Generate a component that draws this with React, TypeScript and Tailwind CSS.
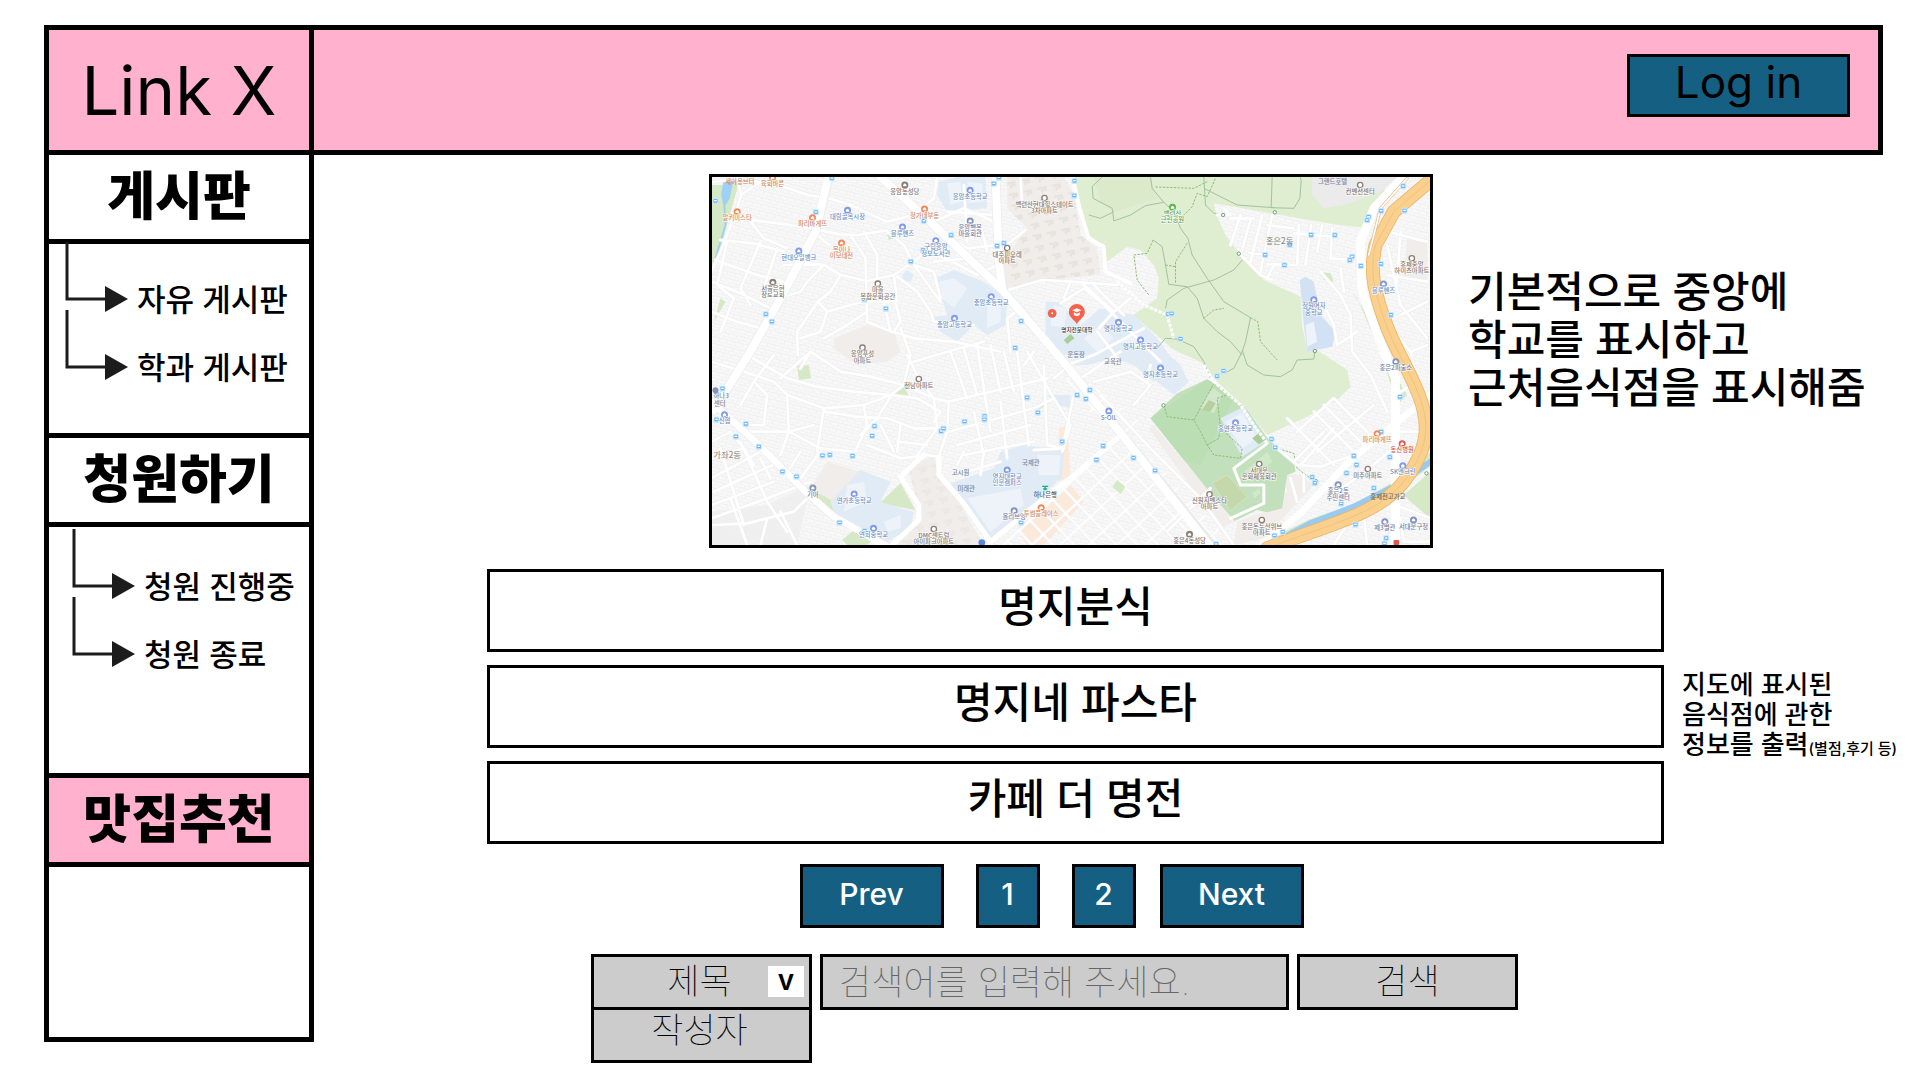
import React from "react";

const KR = "font-['Inter','Noto_Sans_CJK_KR',sans-serif]";

/* ---------- Map drawing ---------- */

type Place = { x: number; y: number; c: string; t: string[]; shape?: "ring" };

const BLUE = "#7f9be8";
const ORANGE = "#f08a5d";
const BROWN = "#8b7d75";
const SLATE = "#8593bb";
const GREEN = "#5fb648";
const RED = "#e2584f";

const textColors: Record<string, string> = {
  [BLUE]: "#7090bd",
  [ORANGE]: "#cf8763",
  [BROWN]: "#81746d",
  [SLATE]: "#7480a3",
  [GREEN]: "#5f9f4c",
  [RED]: "#cf5550",
};

const places: Place[] = [
  { x: 110, y: 140, c: ORANGE, t: ["알키미스타"] },
  { x: 216, y: 38, c: ORANGE, t: ["육회바른"] },
  { x: 336, y: 158, c: ORANGE, t: ["파리바게뜨"] },
  { x: 441, y: 136, c: BLUE, t: ["대림골목시장"] },
  { x: 423, y: 234, c: ORANGE, t: ["봄이나", "이모네전"] },
  { x: 295, y: 258, c: BLUE, t: ["현대오일뱅크"] },
  { x: 613, y: 60, c: BROWN, t: ["응암동성당"] },
  { x: 672, y: 132, c: ORANGE, t: ["정가네부동"] },
  { x: 606, y: 186, c: BLUE, t: ["블루핸즈"] },
  { x: 706, y: 227, c: BLUE, t: ["구립응암", "정보도서관"] },
  { x: 809, y: 76, c: BLUE, t: ["응암초등학교"] },
  { x: 809, y: 168, c: SLATE, t: ["응암행복", "마을회관"] },
  { x: 1032, y: 99, c: BROWN, t: ["백련산현대힐스테이트", "3차아파트"], shape: "ring" },
  { x: 920, y: 249, c: BROWN, t: ["대주피오레", "아파트"], shape: "ring" },
  { x: 217, y: 352, c: BROWN, t: ["서울은현", "장로교회"] },
  { x: 532, y: 356, c: BROWN, t: ["마을", "복합문화공간"], shape: "ring" },
  { x: 872, y: 395, c: BLUE, t: ["충암초등학교"] },
  { x: 762, y: 460, c: BLUE, t: ["충암고등학교"] },
  { x: 486, y: 548, c: BROWN, t: ["응암푸성", "아파트"], shape: "ring" },
  { x: 1254, y: 472, c: BLUE, t: ["명지중학교"] },
  { x: 1320, y: 525, c: BLUE, t: ["명지고등학교"] },
  { x: 1380, y: 609, c: BLUE, t: ["명지초등학교"] },
  { x: 1416, y: 127, c: GREEN, t: ["백련산", "근린공원"] },
  { x: 1979, y: 60, c: BROWN, t: ["컨벤션센터"], shape: "ring" },
  { x: 1840, y: 404, c: BLUE, t: ["정원여자", "중학교"] },
  { x: 2134, y: 280, c: BROWN, t: ["홍제중앙", "하이츠아파트"], shape: "ring" },
  { x: 2049, y: 357, c: BLUE, t: ["블루핸즈"] },
  { x: 2086, y: 590, c: SLATE, t: ["홍은2파출소"] },
  { x: 655, y: 642, c: BROWN, t: ["전남아파트"], shape: "ring" },
  { x: 72, y: 749, c: BLUE, t: ["신협"] },
  { x: 337, y: 969, c: SLATE, t: ["기아"] },
  { x: 461, y: 987, c: BLUE, t: ["연가초등학교"] },
  { x: 519, y: 1090, c: BLUE, t: ["연희중학교"] },
  { x: 700, y: 1092, c: BROWN, t: ["DMC센트럴", "아이파크아파트"], shape: "ring" },
  { x: 920, y: 915, c: BLUE, t: ["명지대학교", "인문캠퍼스"] },
  { x: 941, y: 1037, c: SLATE, t: ["올리브영"] },
  { x: 1022, y: 1028, c: ORANGE, t: ["투썸플레이스"] },
  { x: 1225, y: 738, c: BLUE, t: ["S-OIL"] },
  { x: 1605, y: 773, c: BLUE, t: ["홍연초등학교"] },
  { x: 1676, y: 897, c: BROWN, t: ["서대문", "문화체육회관"], shape: "ring" },
  { x: 1527, y: 988, c: BROWN, t: ["신원지벤스타", "아파트"], shape: "ring" },
  { x: 1684, y: 1065, c: BROWN, t: ["홍은동두산위브", "아파트"], shape: "ring" },
  { x: 1467, y: 1108, c: BROWN, t: ["홍은4동성당"] },
  { x: 2030, y: 806, c: ORANGE, t: ["파리바게뜨"] },
  { x: 2105, y: 836, c: RED, t: ["동신병원"] },
  { x: 2107, y: 902, c: BLUE, t: ["SK엔크린"] },
  { x: 2002, y: 912, c: BROWN, t: ["미주아파트"], shape: "ring" },
  { x: 1913, y: 959, c: SLATE, t: ["홍은2동", "주민센터"] },
  { x: 2053, y: 1070, c: SLATE, t: ["제3별관"] },
  { x: 2139, y: 1065, c: SLATE, t: ["서대문구청"] },
];

const stops: [number, number][] = [
  [394, 40], [346, 142], [45, 108], [196, 448], [214, 470], [492, 404], [556, 431], [631, 290], [670, 168], [752, 211],
  [668, 256], [890, 243], [910, 235], [880, 56], [895, 38], [962, 469], [944, 549], [1122, 48], [1121, 92], [1403, 448],
  [1413, 446], [1440, 522], [1694, 270], [1752, 301], [1768, 240], [1832, 210], [1903, 211], [2004, 156], [2000, 166], [2042, 138],
  [2108, 64], [2112, 137], [1955, 275], [1948, 286], [1981, 303], [2041, 297], [2071, 450], [66, 671], [48, 764], [106, 815],
  [136, 777], [175, 845], [246, 920], [288, 935], [366, 872], [388, 870], [456, 873], [522, 784], [515, 813], [620, 662],
  [722, 799], [729, 791], [792, 770], [852, 754], [852, 764], [980, 698], [1012, 743], [1085, 830], [417, 1073], [492, 1098],
  [962, 1073], [1130, 691], [1168, 676], [1156, 702], [1208, 843], [1188, 885], [1299, 879], [1364, 917], [1550, 634], [1569, 618],
  [1713, 823], [1724, 848], [1835, 937], [1843, 954], [1938, 925], [1968, 900], [1960, 873], [2042, 801], [2068, 877], [2099, 696],
  [2020, 970], [1922, 1016], [1965, 1079], [1722, 1112], [1747, 1101], [1547, 1138], [2057, 1120], [2052, 1136],
];

const minorRoads = [
  "M33 52 120 40 250 66 330 92 380 98 450 120 560 170 640 150 700 100 710 36",
  "M110 36 122 90 110 130 60 260 33 320",
  "M122 90 180 50 240 60M110 160 240 176 330 190 420 208 470 210 560 196M150 170 190 220 260 250",
  "M60 225 160 235 250 260M45 285 170 330 250 350M33 350 120 385 210 430M33 440 110 470 180 490M80 230 50 360 100 400 60 500M180 230 120 370 150 420M230 250 180 400",
  "M300 290 370 300 420 330 500 348 580 330 640 290 700 240 720 200M370 300 320 350 300 380 250 395M250 300 370 300M420 330 390 380 352 410 380 440 480 412 590 408 580 330",
  "M340 200 385 240M450 210 495 280 500 470M490 200 530 270 530 340M560 200 610 240 640 300 700 320 720 400M352 410 290 500 292 570M380 440 360 500 300 520M500 440 440 480 370 520",
  "M500 470 560 495 640 520 760 530 900 560M585 410 600 470 580 500M550 410 570 500M590 335 650 380 690 440 700 470 820 480M640 300 720 410",
  "M700 170 790 130 880 170M740 140 880 150M790 60 800 230M840 180 860 260M720 270 830 330 890 300M760 225 800 250 890 240M700 290 800 280",
  "M905 250 975 195M960 36 965 120M905 370 960 430 920 460 930 560M905 380 1025 345 1110 350 1250 360M1000 560 970 600",
  "M1080 415 1150 370 1200 410 1290 500 1380 590M1110 350 1090 400M1145 355 1240 440 1195 490M1180 360 1270 450M1240 440 1290 400M1190 500 1260 590",
  "M33 590 130 620 220 650 260 690 370 730 490 720 570 690 650 700 720 740M140 570 260 640 350 665 460 680 570 690 610 660",
  "M220 570 160 650 120 720M260 690 265 800 360 850 460 860M370 730 350 860M240 640 330 560 300 610M330 560 420 620 510 635 610 660 700 700 745 710",
  "M370 740 470 755 560 760 640 790 720 790M490 720 500 780 460 870M570 695 530 760 480 810M145 800 265 800 340 780M160 650 200 690 190 780 140 780",
  "M265 800 240 870M300 860 250 940M360 860 300 940M33 830 90 800 130 850 160 900M33 880 130 850M40 980 170 920 240 890M33 1060 200 1000 330 950M60 850 130 1080M120 830 200 1010 260 1100M33 940 180 860M210 940 180 880M33 1020 220 950",
  "M33 1080 140 1075 280 1040 330 990M90 1000 140 1140M200 1060 180 1140M240 1040 290 1140",
  "M500 840 600 880 680 870 715 875M540 780 580 860M600 780 590 860M590 830 680 840M700 700 710 790 650 870M745 710 740 800 715 875",
  "M620 570 655 640 700 700M640 590 740 560 850 530M600 490 630 570 610 660M720 740 700 770",
  "M745 800 1000 730 1060 700M745 710 1040 640M770 840 990 780M790 870 1000 830M800 920 900 890M840 930 850 860M790 860 770 900",
  "M750 560 800 700M790 550 830 690M830 540 870 800M870 540 900 680M910 560 940 680M950 560 985 840M820 740 850 870M900 710 920 880",
  "M980 560 1060 700 1110 780 1085 860M1030 600 1040 840 1090 850M1060 640 1110 600M1000 855 1090 850",
  "M1570 130 1590 150 1550 150M1590 160 1660 160M1590 240 1620 150M1620 270 1650 165M1650 290 1685 150M1680 320 1715 150M1700 180 1780 190M1645 264 1700 268M1700 298 1790 300 1795 180M1700 340 1720 300M1780 205 1900 215M1832 180 1815 300M1865 180 1850 260M1895 190 1890 280 1950 284",
  "M1615 264 1680 330 1715 345M1860 320 1920 390 1950 450 1955 560 2010 630 2060 740M1870 420 1900 480 1910 540 1970 500M1920 310 1930 380",
  "M1730 850 1790 900 1860 905 1960 870M1760 760 1840 840 1900 900M1780 890 1870 800M1800 900 1900 790M1840 740 1970 870M1870 720 1990 840M1900 700 2010 810M1790 800 1900 700M1850 860 2020 720M1770 940 1790 1010M1810 930 1810 980",
  "M1600 1140 1500 1000 1350 850 1200 690M2060 200 2180 230M2060 330 2180 350M2060 240 2100 420 2180 520M2100 450 2180 410M2100 200 2090 350M2080 500 2130 560 2180 540M2085 690 2150 650 2130 560M2085 800 2190 800",
  "M1880 1000 1980 930 2080 850M1800 1100 2080 1010M1900 1140 1950 1060M2000 1140 1990 1050M2085 1020 2190 1060M2100 1060 2110 1130 2190 1130M1400 1100 1480 1020 1530 970",
  "M1350 600 1340 650M1100 600 1180 570 1330 490M1140 640 1260 560M1180 650 1290 620 1350 660M1120 690 1090 830M1350 660 1300 720",
];

const trails = [
  "M1205 36 1175 65 1178 100 1235 130 1240 168 1290 150 1335 122 1390 112 1355 70 1350 36",
  "M1165 150 1200 160 1240 140M1390 112 1420 140 1440 190 1462 220 1475 270 1520 340 1570 410 1650 458 1635 530 1625 560 1600 610 1570 625",
  "M1510 36 1515 120 1540 145 1565 150M1510 70 1550 90 1610 120 1720 128M1715 36 1712 128 1780 130 1798 100 1802 50 1800 36",
  "M1625 285 1600 315 1540 345 1450 370 1400 405 1395 430M1358 225 1385 245 1395 300 1405 358 1460 365 1490 400 1510 460 1550 500 1590 530 1625 570",
  "M1625 555 1640 600 1690 630 1740 635 1775 615 1790 585 1840 582 1843 560M1365 555 1395 520 1430 522 1480 545 1510 590 1530 640",
];

const dashedTrails = [
  "M1365 66 1480 70 1520 50M1440 160 1475 125 1490 85 1520 95 1545 40M1358 225 1340 265 1300 270 1310 345 1345 390M1460 235 1425 290 1425 355M1395 300 1425 305M1510 460 1540 435 1570 430M1650 458 1672 470 1680 530 1730 585",
  "M1390 720 1400 755 1480 765 1500 800 1520 840 1540 870 1620 880 1625 850 1560 790 1550 700 1580 690M1480 765 1540 655M1520 840 1555 820 1560 780M1724 848 1780 865 1790 910 1830 940",
];

const highway = "M2215 25 2080 140 2025 240C2010 310 2015 360 2050 460S2120 600 2155 690 2185 850 2110 950 1860 1085 1700 1150";

function TownMap() {
  return (
    <svg
      viewBox="33 36 2157 1104"
      preserveAspectRatio="xMidYMid slice"
      className="block h-full w-full"
      role="img"
      aria-label="명지전문대학 주변 지도"
    >
      <defs>
        <pattern id="lots" width="24" height="20" patternUnits="userSpaceOnUse" patternTransform="rotate(14)">
          <rect width="24" height="20" fill="#f8f8f8" />
          <path d="M0 0H24M0 0V10M0 10H24M13 10V20" stroke="#ececec" strokeWidth="2" fill="none" />
        </pattern>
        <pattern id="lanes" width="58" height="46" patternUnits="userSpaceOnUse" patternTransform="rotate(47)">
          <path d="M0 4H58M4 0V46" stroke="#ebebeb" strokeWidth="10" fill="none" />
          <path d="M0 4H58M4 0V46" stroke="#fff" strokeWidth="7" fill="none" />
        </pattern>
        <pattern id="courts" width="44" height="34" patternUnits="userSpaceOnUse" patternTransform="rotate(-12)">
          <path d="M6 8H30V16H18V24" stroke="#e8e1dc" strokeWidth="6" fill="none" />
        </pattern>
      </defs>
      <rect x="0" y="0" width="2300" height="1200" fill="url(#lots)" />

      {/* housing estates */}
      <g fill="#f1edea">
        <path d="M920 36H1090L1120 90 1140 210 1190 250 1200 330 1030 345 910 370 905 290 980 190 920 130Z" />
        <path d="M400 520 500 480 580 500 600 560 560 590 470 600 400 550Z" />
        <path d="M380 890 480 920 440 990 400 1020 330 970Z" />
        <path d="M620 900 700 875 715 935 780 1020 850 1140H590L665 1060 650 1010Z" />
        <path d="M1690 1040 1760 980 1750 930 1800 930 1840 960 1690 1120 1600 1140 1610 1070Z" />
        <path d="M2120 220 2180 230 2180 350 2110 340Z" />
        <path d="M1345 790 1360 780 1600 1070 1560 1090Z" />
      </g>
      <path d="M920 36H1090L1120 90 1140 210 1190 250 1200 330 1030 345 910 370 905 290 980 190 920 130Z" fill="url(#courts)" />
      <path d="M620 900 700 875 715 935 780 1020 850 1140H590L665 1060 650 1010Z" fill="url(#courts)" opacity="0.5" />
      <path d="M33 1040 200 1020 330 960 290 1140H33Z" fill="#ededed" opacity="0.7" />
      <g fill="#fbe9da">
        <path d="M1075 790 1100 780 1110 930 1075 950ZM950 1090 1110 960 1150 1010 1030 1140H980Z" />
      </g>

      {/* streets in the dense south-east quarter */}
      <path d="M1090 960 1280 800 1600 1140H900Z" fill="url(#lanes)" />
      <path d="M1100 600 1330 780 1280 830 1100 690Z" fill="url(#lanes)" />

      {/* parks */}
      <path
        d="M1115 36H1835L1840 90 1870 130 1990 90 2060 50 2040 110 2000 190 1900 178 1540 115 1548 150 1575 210 1620 270 1690 345 1800 395 1805 480 1820 560 1850 555 1940 615 1950 665 1910 705 1820 755 1700 810 1640 735 1550 650 1500 590 1420 555 1298 450 1370 400 1375 340 1360 300 1320 255 1280 245 1220 290 1208 240 1165 210 1150 150Z"
        fill="#dfedd0"
      />
      <path d="M1180 36H1350L1370 100 1240 140 1200 110Z" fill="#dbeacb" />
      <path d="M1835 36H2090L2040 80 1930 120 1870 130 1835 90Z" fill="#ebebec" />
      <path
        d="M1350 760 1430 685 1520 643 1560 665 1640 735 1705 825 1780 885 1785 920 1760 930 1745 1030 1700 1042 1670 1035 1602 1068 1530 985 1450 885Z"
        fill="#c1e0bb"
      />
      <path d="M1350 760 1520 643 1600 700 1500 900 1450 885Z" fill="#b8dcb1" opacity="0.6" />
      <path d="M1535 955 1580 930 1640 995 1590 1038Z" fill="#c5d8ac" stroke="#d5e4c3" strokeWidth="3" />
      <path d="M1620 930 1700 860 1715 890 1650 950ZM1655 985 1675 970 1680 985 1662 1000Z" fill="#cfe9c9" />
      <path d="M1520 690 1540 670 1565 690 1540 745 1500 730Z" fill="#d2e8cc" />
      <path d="M1505 735 1525 705 1545 715 1530 740Z" fill="#b7cf9d" />
      <g fill="#d6e9c6">
        <path d="M33 60H70L120 36 60 250 33 300ZM40 470 60 400 75 410 55 445ZM560 210 575 195 580 220 565 225ZM290 602 325 600 332 640 295 645ZM585 685 610 662 628 700ZM537 1015 600 955 645 1035ZM345 980 410 1015 400 1040 350 1010ZM425 1125 460 1095 530 1115 500 1140H440Z" />
        <path d="M1955 380 1970 400 2040 560 2090 720 2120 690 2060 590 2000 450ZM1860 320 1890 325 1900 350 1870 345ZM1010 735 1040 710 1045 715 1015 735ZM1235 965 1250 945 1275 965 1260 987Z" />
        <path d="M2110 990 2190 920V1060L2130 1010Z" />
      </g>
      <path d="M68 50H98L88 100 70 130 62 90Z" fill="#9fd0f5" />
      <path d="M72 125 75 180 42 290" fill="none" stroke="#9fd0f5" strokeWidth="6" />

      {/* school grounds */}
      <g fill="#e1ebf6">
        <path d="M715 50 770 36H855L860 130 740 140 710 90Z" />
        <path d="M705 340 760 315 850 350 920 400 915 480 860 510 820 480 770 530 720 500 700 455 740 450Z" />
        <path d="M1035 410 1075 412 1140 480 1200 430 1300 450 1370 520 1400 560 1360 650 1300 600 1240 580 1160 600 1090 600 1035 520Z" />
        <path d="M1320 575 1390 555 1440 600 1465 650 1420 690 1330 620Z" />
        <path d="M1560 760 1630 725 1695 830 1625 875Z" />
        <path d="M390 1010 480 915 570 950 540 1010 600 1030 640 1040 630 1090 560 1130 500 1110 400 1040Z" />
        <path d="M750 955 880 910 900 860 970 840 1090 855 1085 935 990 1030 870 1130 790 1015Z" />
        <path d="M605 330 620 315 640 330 630 350 608 345ZM1040 690 1110 690V730L1070 720Z" />
      </g>
      <path d="M1798 345 1815 335 1840 350 1860 450 1905 500 1895 545 1820 560 1810 480Z" fill="#d2e1f3" />
      <g fill="#edf3f9">
        <path d="M740 55 780 50 785 110 750 120ZM800 50 845 55 848 110 805 115ZM715 350 760 340 800 370 760 430 725 400ZM860 400 900 400 900 470 860 490Z" />
        <path d="M1060 420 1100 430 1090 490 1050 480ZM1150 520 1200 480 1240 520 1190 560ZM1575 770 1625 745 1670 820 1625 850ZM440 960 490 950 500 1010 430 1040ZM550 1070 600 1050 600 1090 560 1100ZM800 1000 960 970 970 1020 870 1100ZM1010 870 1080 870 1075 930 1015 930ZM1260 530 1310 500 1340 560ZM1815 480 1840 470 1850 530 1820 545ZM1090 570 1130 560 1150 590 1110 600Z" />
      </g>
      <path d="M1655 820 1675 805 1695 825 1675 838ZM1090 525 1110 507 1122 520 1100 537Z" fill="#a9cd96" />

      {/* footpaths */}
      <g fill="none" stroke="#a3c2a2" strokeWidth="3" strokeLinejoin="round">
        {trails.map((d) => (
          <path key={d} d={d} />
        ))}
      </g>
      <g fill="none" stroke="#8fbd78" strokeWidth="3" strokeDasharray="7 4" strokeLinejoin="round">
        {dashedTrails.map((d) => (
          <path key={d} d={d} />
        ))}
      </g>

      {/* streets */}
      <g fill="none" strokeLinejoin="round" strokeLinecap="round">
        <g stroke="#ededed" strokeWidth="11">
          {minorRoads.map((d) => (
            <path key={d} d={d} />
          ))}
        </g>
        <g stroke="#fff" strokeWidth="8">
          {minorRoads.map((d) => (
            <path key={d} d={d} />
          ))}
        </g>
        <path d="M1510 600 1540 650 1620 720 1660 780 1700 835M1250 350 1330 420 1400 450 1420 520" stroke="#fff" strokeWidth="9" strokeDasharray="10 4" strokeLinecap="butt" />
        <path d="M1700 835 1600 910 1620 960 1690 960 1690 1015 1590 1060" stroke="#fff" strokeWidth="9" />

        {/* river */}
        <path d="M1740 1125 1830 1080 1960 1035 2080 970 2190 880" stroke="#d6e9c6" strokeWidth="34" />
        <path d="M1760 1112 1830 1075 1960 1025 2080 965 2190 890" stroke="#98cbef" strokeWidth="18" />

        {/* arterial roads */}
        <g stroke="#ebebeb">
          <path d="M540 36 700 180 905 375 1080 580 1265 810 1530 1135M385 36 345 200 240 400 140 575 40 735M885 30 895 290 905 370" strokeWidth="28" />
          <path d="M33 710 170 835 320 985 400 1055 560 1140" strokeWidth="24" />
        </g>
        <g stroke="#fff">
          <path d="M540 36 700 180 905 375 1080 580 1265 810 1530 1145" strokeWidth="24" />
          <path d="M385 30 345 200 240 400 140 575 40 735M885 30 895 290 905 370" strokeWidth="24" />
          <path d="M33 710 170 835 320 985 400 1055 560 1145" strokeWidth="20" />
          <path d="M570 1145 655 1065 655 1020 600 935 670 870M715 875V930L790 1015 870 1130 980 1040 1110 940 1250 820" strokeWidth="15" />
          <path d="M1115 30 1140 140 1165 220 1210 245 1215 320 1290 355" strokeWidth="11" />
          <path d="M1670 1150 1800 1045 1950 885 2190 690" strokeWidth="20" />
          <path d="M2110 36 2020 130 1980 230 1985 380 2050 560 2085 640V1150" strokeWidth="26" />
        </g>

        {/* elevated highway */}
        <path d={highway} stroke="#edb566" strokeWidth="42" />
        <path d={highway} stroke="#f9d08e" strokeWidth="37" />
        <path d={highway} stroke="#f3c27c" strokeWidth="3" />
        <path d="M2120 40 2040 130 2005 270" stroke="#e9bc86" strokeWidth="9" />
        <path d="M2120 40 2040 130 2005 270" stroke="#fff" strokeWidth="5" />
      </g>

      {/* park gates */}
      <g fill="#fff" stroke="#6f9f70" strokeWidth="3">
        {[[1568, 150], [1723, 142], [1615, 266], [1843, 558], [1389, 721], [1847, 949], [2178, 925]].map(([x, y]) => (
          <circle key={`${x}-${y}`} cx={x} cy={y} r="5" />
        ))}
      </g>

      {/* bus stops */}
      {stops.map(([x, y]) => (
        <g key={`${x}-${y}`}>
          <rect x={x - 9} y={y - 9} width="18" height="18" rx="4" fill="#c9e5fc" />
          <rect x={x - 6} y={y - 6} width="12" height="11" rx="2" fill="#69b7f4" />
          <path d={`M${x - 4} ${y - 1}h8`} stroke="#fff" strokeWidth="4" />
        </g>
      ))}

      {/* named places */}
      <g fontFamily="'Noto Sans CJK KR', sans-serif" textAnchor="middle" fontSize="19" fontWeight="500">
        {places.map((p) => (
          <g key={`${p.x}-${p.y}`}>
            {p.shape === "ring" ? (
              <circle cx={p.x} cy={p.y} r="8" fill="#fff" stroke={p.c} strokeWidth="4" />
            ) : (
              <>
                <circle cx={p.x} cy={p.y} r="10.5" fill={p.c} />
                <path d={`M${p.x - 5} ${p.y + 4}v-5l5-4 5 4v5z`} fill="#fff" />
              </>
            )}
            {p.t.map((line, i) => (
              <text key={line} x={p.x} y={p.y + 26 + i * 19} fill={textColors[p.c]} stroke="#fff" strokeWidth="3" paintOrder="stroke">
                {line}
              </text>
            ))}
          </g>
        ))}
        <circle cx="45" cy="676" r="9" fill={SLATE} />
        <g fill="#7a86a0">
          <text x="991" y="900">국제관</text>
          <text x="780" y="930">고시원</text>
          <text x="797" y="977">미래관</text>
          <text x="1237" y="598">교육관</text>
          <text x="1127" y="577">운동장</text>
          <text x="62" y="698">하나3</text>
          <text x="58" y="722">센터</text>
          <text x="1896" y="58">그랜드호텔</text>
        </g>
        <text x="118" y="57" fill="#cf8763">세이몽브터</text>
        <text x="2062" y="1002" fill="#6f6a66">홍제천고가교</text>
        <g fill="#8a8580" fontSize="25" fontWeight="400">
          <text x="1737" y="237">홍은2동</text>
          <text x="80" y="878">가좌2동</text>
        </g>
        <circle cx="1034" cy="968" r="11" fill="#d8f2ec" />
        <path d="M1025 964H1043M1034 964V976M1028 972 1040 972" stroke="#1fa78f" strokeWidth="4" />
        <text x="1034" y="996" fill="#4a5f66">하나은행</text>
        <rect x="2079" y="1125" width="17" height="15" rx="3" fill="#e2584f" />
        <circle cx="844" cy="1133" r="10" fill="#5f87dd" />

        {/* selected school */}
        <circle cx="1055" cy="445" r="13" fill="#f4614c" />
        <circle cx="1055" cy="445" r="3" fill="#fff" />
        <path d="M1129 477C1120 463 1105 456 1105 441A24 24 0 0 1 1153 441C1153 456 1138 463 1129 477Z" fill="#f4614c" />
        <path d="M1115 436 1129 430 1143 436 1129 442ZM1120 442V450Q1129 457 1138 450V442L1129 446Z" fill="#fff" />
        <text x="1129" y="500" fill="#33302e" stroke="#fff" strokeWidth="3" paintOrder="stroke" fontSize="17">
          명지전문대학
        </text>
      </g>
    </svg>
  );
}

/* ---------- Sidebar ---------- */

function BranchArrow() {
  return (
    <svg width="63" height="68" viewBox="0 0 63 68" className="shrink-0 overflow-visible" aria-hidden="true">
      <path d="M2 -2V55H42" fill="none" stroke="#1c1c1c" strokeWidth="3" />
      <path d="M40 42 63 55 40 68Z" fill="#1c1c1c" />
    </svg>
  );
}

function SubMenu({ items, className }: { items: string[]; className: string }) {
  return (
    <ul className={className}>
      {items.map((item) => (
        <li key={item} className="flex h-[68px]">
          <BranchArrow />
          <a href="#" className="ml-[9px] mt-9 h-10 whitespace-nowrap text-[31px] leading-10 font-medium">
            {item}
          </a>
        </li>
      ))}
    </ul>
  );
}

function SectionTitle({ children, className }: { children: string; className: string }) {
  return (
    <h2 className={`flex items-center justify-center border-black text-[52px] leading-none font-black ${className}`}>
      <a href="#">{children}</a>
    </h2>
  );
}

/* ---------- Page ---------- */

const shops = ["명지분식", "명지네 파스타", "카페 더 명전"];
const pageButton = "h-16 border-[3px] border-black bg-[#156082] pb-1 text-[30px] leading-none font-medium text-white";
const field = "h-14 border-[3px] border-black bg-[#cccccc] text-[35px] leading-none font-thin";

export default function App() {
  return (
    <div className={`min-h-screen bg-white pt-[25px] pb-4 text-black ${KR}`} lang="ko">
      <header className="mr-[37px] ml-11 flex h-[130px] border-[5px] border-black bg-[#ffb1ce]">
        <h1 className="flex w-[265px] shrink-0 items-center justify-center border-r-[5px] border-black text-[67px] leading-none">
          <a href="#">Link X</a>
        </h1>
        <div className="flex flex-1 items-start justify-end pt-6 pr-7">
          <button className="h-[63px] w-[223px] border-[3px] border-black bg-[#156082] pb-2 text-[44px] leading-none">
            Log in
          </button>
        </div>
      </header>

      <div className="ml-11 flex">
        <nav className="w-[270px] shrink-0 self-start border-x-[5px] border-b-[5px] border-black" aria-label="메뉴">
          <SectionTitle className="h-[89px] border-b-[5px]">게시판</SectionTitle>
          <SubMenu items={["자유 게시판", "학과 게시판"]} className="h-[189px] pl-4" />
          <SectionTitle className="h-[94px] border-y-[5px]">청원하기</SectionTitle>
          <SubMenu items={["청원 진행중", "청원 종료"]} className="h-[246px] pt-1 pl-[23px]" />
          <SectionTitle className="h-[94px] border-y-[5px] bg-[#ffb1ce]">맛집추천</SectionTitle>
          <div className="h-[170px]" />
        </nav>

        <main className="min-w-0 flex-1 pt-[19px] pr-[18px] pl-[173px]">
          <section className="flex gap-[35px] pl-[222px]">
            <div className="h-[374px] min-w-0 flex-1 border-[3px] border-black">
              <TownMap />
            </div>
            <p className="w-[434px] shrink-0 pt-[94px] text-[42px] leading-[48px] font-medium whitespace-nowrap">
              기본적으로 중앙에
              <br />
              학교를 표시하고
              <br />
              근처음식점을 표시해줌
            </p>
          </section>

          <section className="mt-[21px] flex gap-[18px]">
            <ul className="flex min-w-0 flex-1 flex-col gap-[13px]">
              {shops.map((shop) => (
                <li key={shop}>
                  <a
                    href="#"
                    className="flex h-[83px] items-center justify-center border-[3px] border-black pb-2 text-[42px] leading-none font-medium"
                  >
                    {shop}
                  </a>
                </li>
              ))}
            </ul>
            <p className="w-[220px] shrink-0 pt-[101px] text-[26px] leading-[30px] font-medium whitespace-nowrap">
              지도에 표시된
              <br />
              음식점에 관한
              <br />
              정보를 출력<span className="text-[15px]">(별점,후기 등)</span>
            </p>
          </section>

          <div className="mr-[238px]">
            <nav className="mt-5 flex justify-center pr-12" aria-label="페이지">
              <button className={`${pageButton} w-36`}>Prev</button>
              <button className={`${pageButton} ml-8 w-16`}>1</button>
              <button className={`${pageButton} ml-8 w-16`}>2</button>
              <button className={`${pageButton} ml-6 w-36`}>Next</button>
            </nav>

            <form className="mt-[26px] flex justify-center gap-2 pr-[42px]" onSubmit={(e) => e.preventDefault()}>
              <div className="w-[221px]">
                <div className="relative">
                  <select
                    aria-label="검색 기준"
                    className={`${field} block w-full appearance-none pr-1 pb-px text-center [text-align-last:center]`}
                    defaultValue="제목"
                  >
                    <option>제목</option>
                    <option>작성자</option>
                  </select>
                  <span className="pointer-events-none absolute top-3 right-2 flex h-[31px] w-9 items-center justify-center bg-white pb-1 text-[28px] leading-none font-semibold">
                    v
                  </span>
                </div>
                <button type="button" className={`${field} -mt-[3px] block w-full pr-1 pb-2.5`}>
                  작성자
                </button>
              </div>
              <input
                type="text"
                aria-label="검색어"
                placeholder="검색어를 입력해 주세요."
                className={`${field} w-[469px] px-4 pb-px placeholder:text-[#666666] placeholder:opacity-100`}
              />
              <button type="submit" className={`${field} w-[221px] pb-px`}>
                검색
              </button>
            </form>
          </div>
        </main>
      </div>
    </div>
  );
}
